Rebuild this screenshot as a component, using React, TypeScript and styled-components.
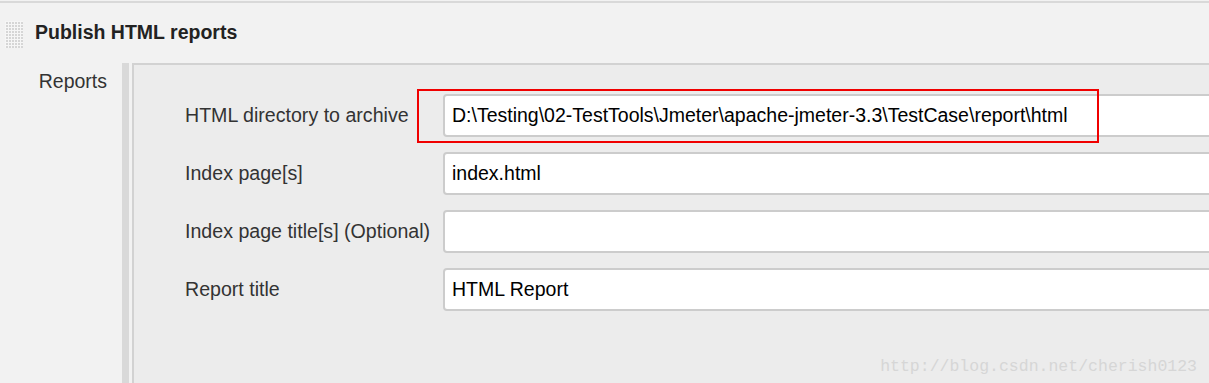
import styled, {createGlobalStyle} from 'styled-components'

const GlobalStyle = createGlobalStyle`
  html, body {
    margin: 0;
    padding: 0;
    background: #f2f2f2;
    overflow: hidden;
  }
  body {
    font-family: 'Liberation Sans', Arial, sans-serif;
  }
`

const fields = [
  {label: 'HTML directory to archive', value: 'D:\\Testing\\02-TestTools\\Jmeter\\apache-jmeter-3.3\\TestCase\\report\\html', marked: true},
  {label: 'Index page[s]', value: 'index.html'},
  {label: 'Index page title[s] (Optional)', value: ''},
  {label: 'Report title', value: 'HTML Report'},
]

const App = () => {
  return (
    <Page>
      <GlobalStyle />
      <Header>
        <DragHandle />
        <Title>Publish HTML reports</Title>
      </Header>
      <Section>
        <SectionLabel>Reports</SectionLabel>
        <SideBar />
        <Panel>
          <FieldGrid>
            {fields.map((f) => (
              <Row key={f.label}>
                <FieldLabel>{f.label}</FieldLabel>
                <InputCell>
                  <TextBox readOnly value={f.value} />
                  {f.marked && <Highlight />}
                </InputCell>
              </Row>
            ))}
          </FieldGrid>
        </Panel>
      </Section>
      <Watermark>http://blog.csdn.net/cherish0123</Watermark>
    </Page>
  )
}

export default App

const Page = styled.div`
  position: relative;
  width: 1209px;
  height: 383px;
  margin-top: 1px;
  border-top: 2px solid #d9d9d9;
  background: #f2f2f2;
  overflow: hidden;
  display: flex;
  flex-direction: column;
`

const Header = styled.div`
  height: 60px;
  display: flex;
  align-items: center;
  padding-left: 5px;
  box-sizing: border-box;
`

const DragHandle = styled.div`
  width: 18px;
  height: 27px;
  margin-top: 2px;
  background-color: #d6d6d6;
  background-image: linear-gradient(90deg, #f6f6f6 1px, transparent 1px), linear-gradient(#f6f6f6 1px, transparent 1px);
  background-size: 3px 3px;
`

const Title = styled.div`
  margin-left: 12px;
  font-size: 19.5px;
  font-weight: bold;
  color: #222;
  margin-top: -2px;
`

const Section = styled.div`
  flex: 1;
  display: flex;
  min-height: 0;
`

const SectionLabel = styled.div`
  width: 107px;
  padding-top: 7px;
  text-align: right;
  font-size: 19.5px;
  line-height: 22px;
  color: #333;
  box-sizing: border-box;
`

const SideBar = styled.div`
  width: 7px;
  margin-left: 15px;
  background: #d9d9d9;
`

const Panel = styled.div`
  flex: 1;
  margin-left: 3px;
  border-top: 2px solid #d2d2d2;
  border-left: 2px solid #d2d2d2;
  background: #ececec;
  padding: 29px 0 0 51px;
  overflow: hidden;
`

const FieldGrid = styled.div`
  display: flex;
  flex-direction: column;
  gap: 15px;
`

const Row = styled.div`
  display: grid;
  grid-template-columns: 258px 1fr;
  align-items: center;
  height: 43px;
`

const FieldLabel = styled.div`
  font-size: 19.6px;
  color: #333;
  white-space: nowrap;
`

const InputCell = styled.div`
  position: relative;
  height: 100%;
  margin-right: -20px;
`

const TextBox = styled.input`
  box-sizing: border-box;
  width: 100%;
  height: 43px;
  border: 2px solid #cccccc;
  border-radius: 4px;
  background: #fff;
  padding: 0 7px;
  font-family: 'Liberation Sans', Arial, sans-serif;
  font-size: 19.5px;
  color: #000;
  outline: none;
`

const Highlight = styled.div`
  position: absolute;
  left: -26px;
  top: -5px;
  width: 682px;
  height: 54px;
  box-sizing: border-box;
  border: 2px solid #f00000;
  pointer-events: none;
`

const Watermark = styled.div`
  position: absolute;
  right: 12px;
  bottom: 10px;
  font-family: 'Liberation Mono', 'DejaVu Sans Mono', monospace;
  font-size: 16.5px;
  color: #d6d6d6;
`
